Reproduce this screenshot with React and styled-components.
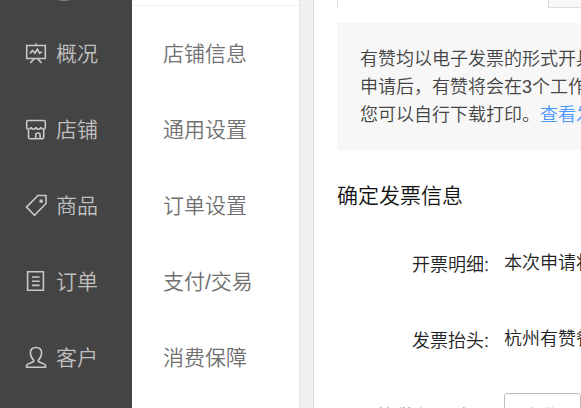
import React from "react";
import styled, { createGlobalStyle } from "styled-components";

const GlobalStyle = createGlobalStyle`
  * {
    box-sizing: border-box;
  }
  html, body, #root {
    height: 100%;
  }
  body {
    margin: 0;
    overflow: hidden;
    background-color: #ffffff;
    font-family: "Liberation Sans", "Noto Sans CJK SC", sans-serif;
    font-weight: 350;
  }
`;

const OverviewIcon = () => (
  <Icon viewBox="0 0 22 22">
    <path d="M1.700 3.500h18.600v13h-18.600zM11 1.500v2M5 11.500l2.400-3 2.600 2.600 2.400-4 2.200 4.200 2.200-1.600M9.400 16.600l-4.200 4.400M12.400 16.600l4.200 4.400" />
  </Icon>
);

const ShopIcon = () => (
  <Icon viewBox="0 0 22 22">
    <path d="M3.200 2.500h15.600q1.500 0 1.500 1.500v5.200q0 2-2 2t-2.400-2q-.4 2-2.500 2t-2.400-2q-.4 2-2.500 2t-2.500-2q-.4 2-2.400 2t-1.900-2V4q0-1.500 1.100-1.500zM3.500 11.200v8q0 1.600 1.600 1.600h12q1.600 0 1.600-1.600v-8M10.700 20.800v-3.600q0-2.200 2.200-2.200t2.200 2.200v3.600" />
  </Icon>
);

const GoodsIcon = () => (
  <Icon viewBox="0 0 22 22">
    <path d="M13 1.500h8v8L9.500 21.300l-8-8.200z" />
    <path d="M15.300 6.300h1.700v1.700h-1.700z" />
  </Icon>
);

const OrderIcon = () => (
  <Icon viewBox="0 0 22 22">
    <path d="M2.600 1.700h15.800v18.600H2.600zM7 7h7.600M7 11.200h7.600M7 15.400h7.600" />
  </Icon>
);

const CustomerIcon = () => (
  <Icon viewBox="0 0 22 22">
    <path d="M8.700 14.400C6.400 12 5.400 9.400 5.400 6.800C5.400 3.400 7.800 1.500 11 1.500s5.600 1.900 5.600 5.300c0 2.600-1 5.200-3.300 7.600v1c1.400 1.600 6.900 1.800 7.300 4.200v1.600H1.500v-1.600c.4-2.400 5.800-2.600 7.200-4.200z" />
  </Icon>
);

const menus = [
  { name: "概况", icon: <OverviewIcon /> },
  { name: "店铺", icon: <ShopIcon /> },
  { name: "商品", icon: <GoodsIcon /> },
  { name: "订单", icon: <OrderIcon /> },
  { name: "客户", icon: <CustomerIcon /> },
];

const subMenus = ["店铺信息", "通用设置", "订单设置", "支付/交易", "消费保障"];

const App = () => {
  return (
    <>
      <GlobalStyle />
      <Page>
        <SideBar>
          <Avatar />
          {menus.map((menu) => (
            <MenuLink href="#" key={menu.name}>
              {menu.icon}
              {menu.name}
            </MenuLink>
          ))}
        </SideBar>
        <SubBar>
          <SubTitle />
          {subMenus.map((name) => (
            <SubLink href="#" key={name}>{name}</SubLink>
          ))}
        </SubBar>
        <Content>
          <TabRow>
            <ActiveTab />
            <RestTab />
          </TabRow>
          <Notice>
            <Line>有赞均以电子发票的形式开具</Line>
            <Line>申请后，有赞将会在3个工作日</Line>
            <Line>您可以自行下载打印。<NoticeLink href="#">查看发票</NoticeLink></Line>
          </Notice>
          <SectionTitle>确定发票信息</SectionTitle>
          <Row>
            <Label as="div">开票明细:</Label>
            <Value>本次申请将</Value>
          </Row>
          <Row>
            <Label as="div">发票抬头:</Label>
            <Value>杭州有赞餐</Value>
          </Row>
          <Row>
            <Label htmlFor="taxNumber"><Required>*</Required>纳税人识别号:</Label>
            <Input id="taxNumber" placeholder="企业必填" />
          </Row>
        </Content>
      </Page>
    </>
  );
};

const Page = styled.div`
  display: flex;
  height: 100%;
  overflow: hidden;
  background-color: #f0f0f0;
`;

const SideBar = styled.nav`
  flex: 0 0 132px;
  background-color: #444444;
`;

const Avatar = styled.div`
  margin: -39px 0 13px 44px;
  width: 40px;
  height: 40px;
  border-radius: 50%;
  background-color: #888888;
`;

const MenuLink = styled.a`
  display: flex;
  align-items: center;
  gap: 9px;
  padding-left: 25px;
  height: 76px;
  font-size: 21px;
  color: #c0c0c0;
  text-decoration: none;
`;

const Icon = styled.svg`
  margin-top: 1px;
  width: 22px;
  height: 22px;
  fill: none;
  stroke: #c8c8c8;
  stroke-width: 1.6;
`;

const SubBar = styled.nav`
  flex: 0 0 168px;
  background-color: #ffffff;
  border-right: 1px solid #e2e2e2;
`;

const SubTitle = styled.div`
  height: 6px;
  margin-bottom: 8px;
  border-bottom: 1px solid #eeeeee;
`;

const SubLink = styled.a`
  display: flex;
  align-items: center;
  padding-left: 31px;
  height: 76px;
  font-size: 21px;
  color: #707070;
  text-decoration: none;
`;

const Content = styled.main`
  flex: 1;
  min-width: 0;
  margin-left: 13px;
  padding-left: 23px;
  border-left: 1px solid #dddddd;
  background-color: #ffffff;
  overflow: hidden;
`;

const TabRow = styled.div`
  display: flex;
  height: 8px;
  margin-bottom: 15px;
`;

const ActiveTab = styled.div`
  flex: 0 0 211px;
  border-left: 1px solid #dddddd;
`;

const RestTab = styled.div`
  flex: 1;
  border-left: 1px solid #dddddd;
  border-bottom: 1px solid #dddddd;
  background-color: #f8f8f8;
`;

const Notice = styled.div`
  padding: 22px 0 21px 23px;
  margin-bottom: 29px;
  background-color: #f7f7f7;
  overflow: hidden;
`;

const Line = styled.p`
  margin: 0;
  font-size: 18px;
  line-height: 28px;
  color: #444444;
  white-space: nowrap;
`;

const NoticeLink = styled.a`
  color: #4b96ff;
  text-decoration: none;
`;

const SectionTitle = styled.h2`
  margin: 0 0 28px;
  font-size: 21px;
  font-weight: 350;
  line-height: 34px;
  color: #111111;
`;

const Row = styled.div`
  display: flex;
  align-items: center;
  gap: 15px;
  height: 44px;
  margin-bottom: 32px;
`;

const Label = styled.label`
  flex: 0 0 152px;
  padding-top: 4px;
  font-size: 18px;
  line-height: 36px;
  text-align: right;
  color: #222222;
  white-space: nowrap;
`;

const Required = styled.span`
  margin-right: 8px;
  color: #ee3333;
`;

const Value = styled.div`
  font-size: 18px;
  line-height: 36px;
  color: #222222;
  white-space: nowrap;
`;

const Input = styled.input`
  flex: 1;
  min-width: 0;
  height: 44px;
  padding: 4px 18px 0;
  border: 1px solid #bbbbbb;
  border-radius: 3px;
  font: inherit;
  font-size: 18px;
  &::placeholder {
    color: #999999;
  }
`;

export default App;
